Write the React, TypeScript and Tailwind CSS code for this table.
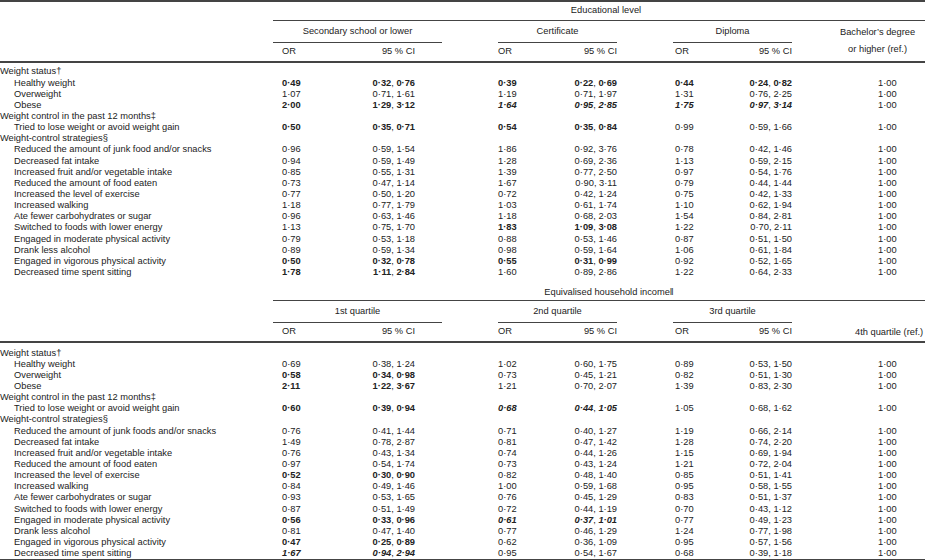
import React from 'react';

type R = string[];

const S1: R[] = [
  ['Weight status†'],
  ['Healthy weight', '0·49*', '0·32, 0·76*', '0·39*', '0·22, 0·69*', '0·44*', '0·24, 0·82*'],
  ['Overweight', '1·07', '0·71, 1·61', '1·19', '0·71, 1·97', '1·31', '0·76, 2·25'],
  ['Obese', '2·00*', '1·29, 3·12*', '1·64**', '0·95, 2·85**', '1·75**', '0·97, 3·14**'],
  ['Weight control in the past 12 months‡'],
  ['Tried to lose weight or avoid weight gain', '0·50*', '0·35, 0·71*', '0·54*', '0·35, 0·84*', '0·99', '0·59, 1·66'],
  ['Weight-control strategies§'],
  ['Reduced the amount of junk food and/or snacks', '0·96', '0·59, 1·54', '1·86', '0·92, 3·76', '0·78', '0·42, 1·46'],
  ['Decreased fat intake', '0·94', '0·59, 1·49', '1·28', '0·69, 2·36', '1·13', '0·59, 2·15'],
  ['Increased fruit and/or vegetable intake', '0·85', '0·55, 1·31', '1·39', '0·77, 2·50', '0·97', '0·54, 1·76'],
  ['Reduced the amount of food eaten', '0·73', '0·47, 1·14', '1·67', '0·90, 3·11', '0·79', '0·44, 1·44'],
  ['Increased the level of exercise', '0·77', '0·50, 1·20', '0·72', '0·42, 1·24', '0·75', '0·42, 1·33'],
  ['Increased walking', '1·18', '0·77, 1·79', '1·03', '0·61, 1·74', '1·10', '0·62, 1·94'],
  ['Ate fewer carbohydrates or sugar', '0·96', '0·63, 1·46', '1·18', '0·68, 2·03', '1·54', '0·84, 2·81'],
  ['Switched to foods with lower energy', '1·13', '0·75, 1·70', '1·83*', '1·09, 3·08*', '1·22', '0·70, 2·11'],
  ['Engaged in moderate physical activity', '0·79', '0·53, 1·18', '0·88', '0·53, 1·46', '0·87', '0·51, 1·50'],
  ['Drank less alcohol', '0·89', '0·59, 1·34', '0·98', '0·59, 1·64', '1·06', '0·61, 1·84'],
  ['Engaged in vigorous physical activity', '0·50*', '0·32, 0·78*', '0·55*', '0·31, 0·99*', '0·92', '0·52, 1·65'],
  ['Decreased time spent sitting', '1·78*', '1·11, 2·84*', '1·60', '0·89, 2·86', '1·22', '0·64, 2·33'],
];

const S2: R[] = [
  ['Weight status†'],
  ['Healthy weight', '0·69', '0·38, 1·24', '1·02', '0·60, 1·75', '0·89', '0·53, 1·50'],
  ['Overweight', '0·58*', '0·34, 0·98*', '0·73', '0·45, 1·21', '0·82', '0·51, 1·30'],
  ['Obese', '2·11*', '1·22, 3·67*', '1·21', '0·70, 2·07', '1·39', '0·83, 2·30'],
  ['Weight control in the past 12 months‡'],
  ['Tried to lose weight or avoid weight gain', '0·60*', '0·39, 0·94*', '0·68**', '0·44, 1·05**', '1·05', '0·68, 1·62'],
  ['Weight-control strategies§'],
  ['Reduced the amount of junk foods and/or snacks', '0·76', '0·41, 1·44', '0·71', '0·40, 1·27', '1·19', '0·66, 2·14'],
  ['Decreased fat intake', '1·49', '0·78, 2·87', '0·81', '0·47, 1·42', '1·28', '0·74, 2·20'],
  ['Increased fruit and/or vegetable intake', '0·76', '0·43, 1·34', '0·74', '0·44, 1·26', '1·15', '0·69, 1·94'],
  ['Reduced the amount of food eaten', '0·97', '0·54, 1·74', '0·73', '0·43, 1·24', '1·21', '0·72, 2·04'],
  ['Increased the level of exercise', '0·52*', '0·30, 0·90*', '0·82', '0·48, 1·40', '0·85', '0·51, 1·41'],
  ['Increased walking', '0·84', '0·49, 1·46', '1·00', '0·59, 1·68', '0·95', '0·58, 1·55'],
  ['Ate fewer carbohydrates or sugar', '0·93', '0·53, 1·65', '0·76', '0·45, 1·29', '0·83', '0·51, 1·37'],
  ['Switched to foods with lower energy', '0·87', '0·51, 1·49', '0·72', '0·44, 1·19', '0·70', '0·43, 1·12'],
  ['Engaged in moderate physical activity', '0·56*', '0·33, 0·96*', '0·61**', '0·37, 1·01**', '0·77', '0·49, 1·23'],
  ['Drank less alcohol', '0·81', '0·47, 1·40', '0·77', '0·46, 1·29', '1·24', '0·77, 1·98'],
  ['Engaged in vigorous physical activity', '0·47*', '0·25, 0·89*', '0·62', '0·36, 1·09', '0·95', '0·57, 1·56'],
  ['Decreased time spent sitting', '1·67**', '0·94, 2·94**', '0·95', '0·54, 1·67', '0·68', '0·39, 1·18'],
];

const COLS = 'grid grid-cols-[273px_67px_102px_56px_57px_62px_56px_57px_62px_133px]';

function styleOf(t: string): [string, string] {
  if (t.endsWith('**')) return [t.slice(0, -2), 'font-bold italic'];
  if (t.endsWith('*')) return [t.slice(0, -1), 'font-bold'];
  return [t, ''];
}

function Num({ t }: { t: string }) {
  const [v, cls] = styleOf(t);
  const parts = v.split(', ');
  if (parts.length === 2) {
    return (
      <span>
        <span className={cls}>{parts[0]}</span>, <span className={cls}>{parts[1]}</span>
      </span>
    );
  }
  return <span className={cls}>{v}</span>;
}

function Body({ rows }: { rows: R[] }) {
  return (
    <div className="flex flex-col">
      {rows.map((r, i) =>
        r.length === 1 ? (
          <div key={i} className={`${COLS} h-[11.15px] items-center`}>
            <div className="col-span-10 whitespace-nowrap">{r[0]}</div>
          </div>
        ) : (
          <div key={i} className={`${COLS} h-[11.15px] items-center whitespace-nowrap`}>
            <div className="pl-[14px]">{r[0]}</div>
            <div className="pl-[9px]"><Num t={r[1]} /></div>
            <div className="text-right pr-[27px]"><Num t={r[2]} /></div>
            <div />
            <div className="pl-[0px]"><Num t={r[3]} /></div>
            <div className="text-right"><Num t={r[4]} /></div>
            <div />
            <div className="pl-[2px]"><Num t={r[5]} /></div>
            <div className="text-right"><Num t={r[6]} /></div>
            <div className="pl-[86px]">1·00</div>
          </div>
        )
      )}
    </div>
  );
}

function GroupHeader({ groups, refCell }: { groups: string[]; refCell: React.ReactNode }) {
  return (
    <div className={`${COLS} grid-rows-[21px_1px_18px] whitespace-nowrap`}>
      <div className="col-start-2 col-span-2 row-start-1 flex items-center justify-center">{groups[0]}</div>
      <div className="col-start-5 col-span-2 row-start-1 flex items-center justify-center">{groups[1]}</div>
      <div className="col-start-8 col-span-2 row-start-1 flex items-center justify-center">{groups[2]}</div>
      <div className="col-start-10 row-start-1 row-span-3">{refCell}</div>
      <div className="col-start-2 col-span-2 row-start-2 bg-[#444]" />
      <div className="col-start-5 col-span-2 row-start-2 bg-[#444]" />
      <div className="col-start-8 col-span-2 row-start-2 bg-[#444]" />
      <div className="col-start-2 row-start-3 pl-[9px] flex items-center">OR</div>
      <div className="col-start-3 row-start-3 pr-[27px] flex items-center justify-end">95 % CI</div>
      <div className="col-start-5 row-start-3 flex items-center">OR</div>
      <div className="col-start-6 row-start-3 flex items-center justify-end">95 % CI</div>
      <div className="col-start-8 row-start-3 pl-[2px] flex items-center">OR</div>
      <div className="col-start-9 row-start-3 flex items-center justify-end">95 % CI</div>
    </div>
  );
}

export default function App() {
  return (
    <div className="w-[925px] h-[560px] overflow-hidden bg-white text-[#222] font-['Liberation_Sans',Arial,sans-serif] text-[9.3px] leading-[11.15px]">
      <div className="h-[2px] bg-[#444]" />
      <div className={`${COLS} h-[18px]`}>
        <div className="col-start-2 col-span-9 flex justify-center pt-[3px] pl-[14px]">Educational level</div>
      </div>
      <div className={COLS}>
        <div className="col-start-2 col-span-9 h-px bg-[#444]" />
      </div>
      <GroupHeader
        groups={['Secondary school or lower', 'Certificate', 'Diploma']}
        refCell={
          <div className="h-full flex items-center pl-[48px]">
            <div className="flex flex-col items-center leading-[17px] whitespace-nowrap">
              <span>Bachelor’s degree</span>
              <span>or higher (ref.)</span>
            </div>
          </div>
        }
      />
      <div className="h-[2px] bg-[#444]" />
      <div className="h-[3.4px]" />
      <Body rows={S1} />
      <div className="h-[6.6px]" />
      <div className={`${COLS} h-[15px]`}>
        <div className="col-start-2 col-span-9 flex items-center justify-center pl-[20px]">Equivalised household income‖</div>
      </div>
      <div className={COLS}>
        <div className="col-start-2 col-span-9 h-px bg-[#444]" />
      </div>
      <GroupHeader
        groups={['1st quartile', '2nd quartile', '3rd quartile']}
        refCell={
          <div className="h-full flex items-end pb-[3px] pl-[63px] whitespace-nowrap">4th quartile (ref.)</div>
        }
      />
      <div className="h-[2px] bg-[#444]" />
      <div className="h-[4.9px]" />
      <Body rows={S2} />
      <div className="h-[2px] bg-[#444]" />
    </div>
  );
}
